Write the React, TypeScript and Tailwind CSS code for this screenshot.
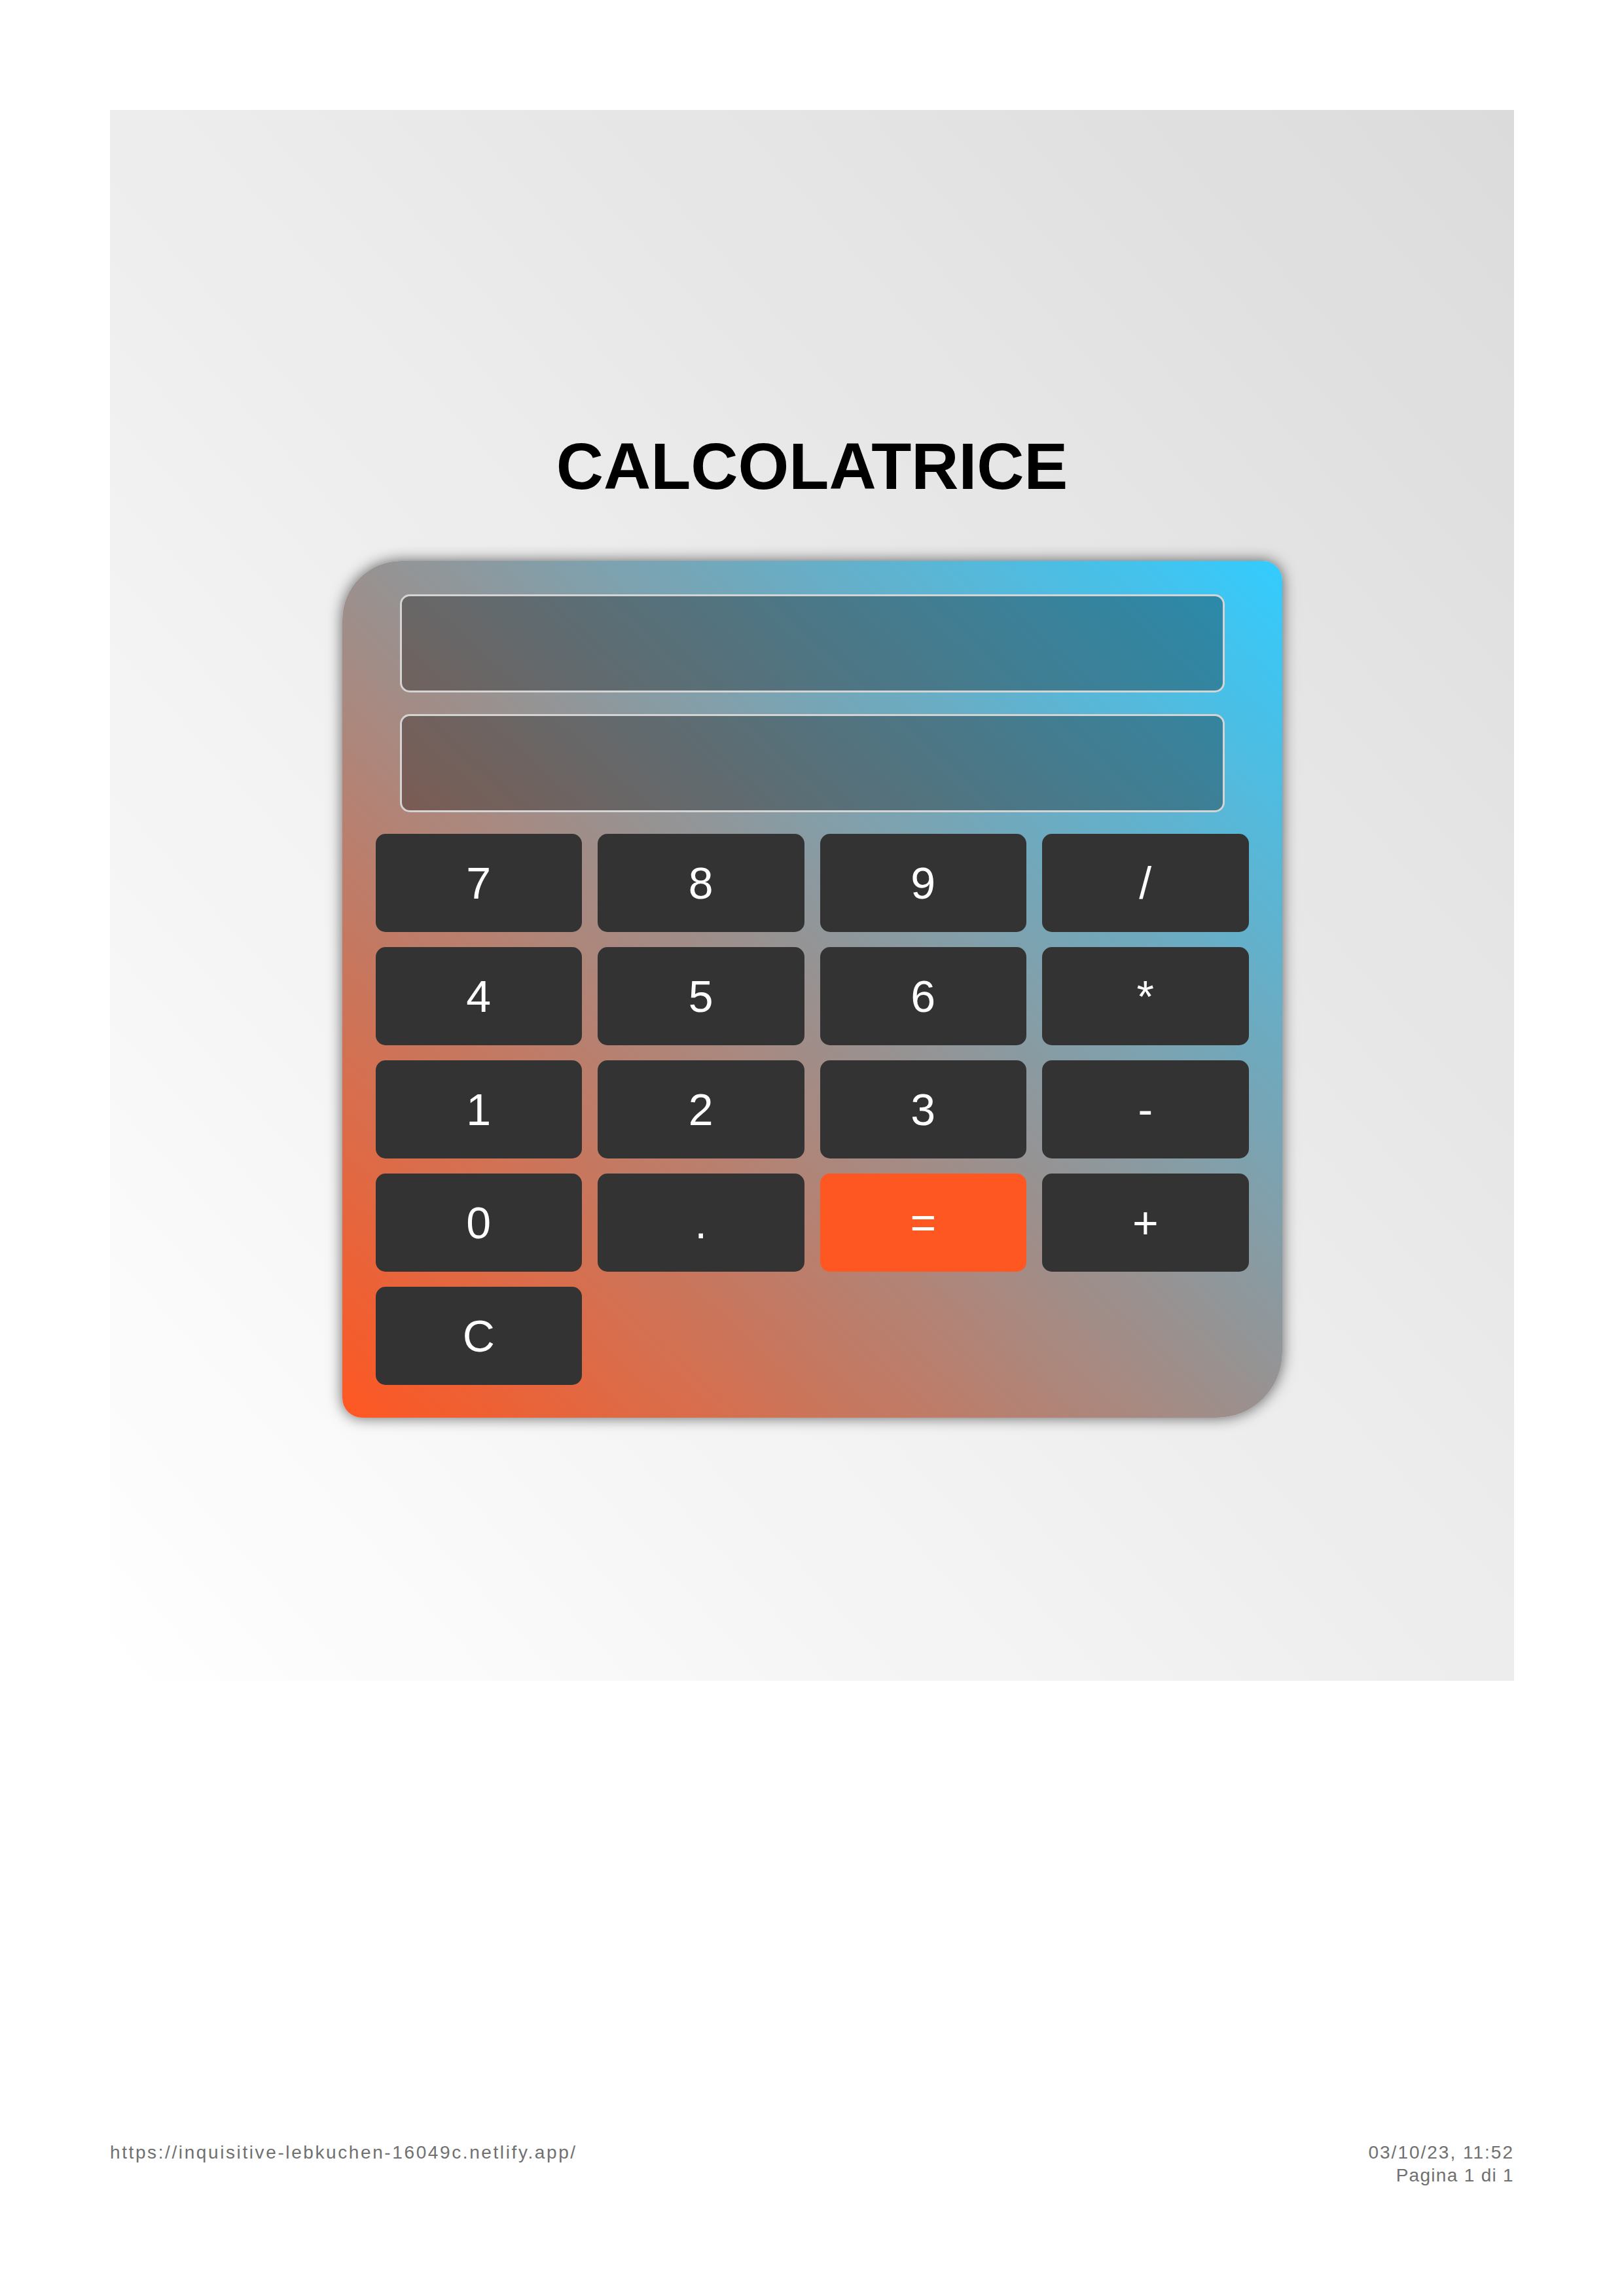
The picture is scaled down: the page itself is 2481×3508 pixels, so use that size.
import React from 'react';

const keys: { label: string; accent?: boolean }[] = [
  { label: '7' }, { label: '8' }, { label: '9' }, { label: '/' },
  { label: '4' }, { label: '5' }, { label: '6' }, { label: '*' },
  { label: '1' }, { label: '2' }, { label: '3' }, { label: '-' },
  { label: '0' }, { label: '.' }, { label: '=', accent: true }, { label: '+' },
  { label: 'C' },
];

const App: React.FC = () => {
  return (
    <div className="w-[2481px] min-h-[3508px] bg-white flex flex-col font-['Liberation_Sans',Arial,sans-serif]">
      <div className="mx-[168px] mt-[168px] h-[2400px] bg-[linear-gradient(to_top_right,#ffffff,#dbdbdb)] flex flex-col items-center">
        <h1 className="mt-[494px] text-[100px] leading-none font-bold text-black">CALCOLATRICE</h1>

        <div className="mt-[95px] w-[1436px] pt-[51px] pb-[50px] px-[51px] bg-[linear-gradient(to_top_right,#ff5722,#33ccff)] rounded-tl-[90px] rounded-tr-[30px] rounded-bl-[30px] rounded-br-[100px] shadow-[0_0_22px_rgba(0,0,0,0.6)]">
          <div className="mx-[37px] h-[150px] rounded-[15px] border-[3px] border-[#d4d4d4] bg-black/30 mb-[33px]" />
          <div className="mx-[37px] h-[150px] rounded-[15px] border-[3px] border-[#d4d4d4] bg-black/30 mb-[33px]" />

          <div className="grid grid-cols-4 gap-x-[24px] gap-y-[23px]">
            {keys.map((k) => (
              <button
                key={k.label}
                className={`h-[150px] rounded-[15px] flex items-center justify-center text-white text-[68px] leading-none ${
                  k.accent ? 'bg-[#ff5722]' : 'bg-[#333333]'
                }`}
              >
                {k.label}
              </button>
            ))}
          </div>
        </div>
      </div>

      <footer className="mx-[168px] mt-[703px] flex justify-between text-[28px] leading-[35px] text-[#707070]">
        <span className="tracking-[2.6px]">https://inquisitive-lebkuchen-16049c.netlify.app/</span>
        <div className="text-right">
          <p className="tracking-[2px]">03/10/23, 11:52</p>
          <p className="tracking-[1.3px]">Pagina 1 di 1</p>
        </div>
      </footer>
    </div>
  );
};

export default App;
